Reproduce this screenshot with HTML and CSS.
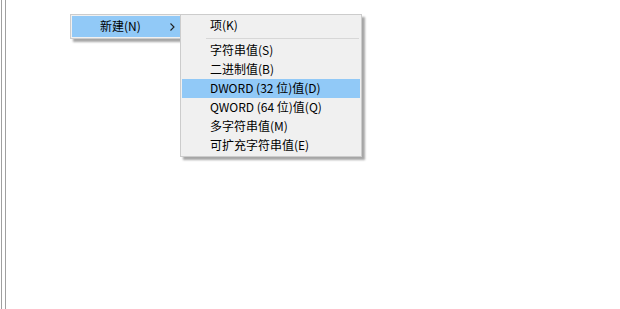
FILE: index.html
```html
<!DOCTYPE html>
<html lang="zh-CN">
<head>
<meta charset="utf-8">
<title>新建</title>
<link rel="stylesheet" href="styles.css">
</head>
<body>
<div class="frame">
  <div class="rail"></div>
  <div class="canvas">
    <div class="menu menu-main">
      <div class="item active">
        <span class="label">新建(N)</span>
        <svg class="chev" width="5" height="8" viewBox="0 0 5 8"><path d="M0.5 0.5 L4 4 L0.5 7.5" fill="none" stroke="#202020" stroke-width="1.1"/></svg>
      </div>
    </div>
    <div class="menu menu-sub">
      <div class="item">项(K)</div>
      <div class="sep"></div>
      <div class="item">字符串值(S)</div>
      <div class="item">二进制值(B)</div>
      <div class="item active">DWORD (32 位)值(D)</div>
      <div class="item">QWORD (64 位)值(Q)</div>
      <div class="item">多字符串值(M)</div>
      <div class="item">可扩充字符串值(E)</div>
    </div>
  </div>
</div>
</body>
</html>
```

FILE: styles.css
```css
html, body {
  margin: 0;
  padding: 0;
  background: #ffffff;
}
body {
  font-family: "Noto Sans CJK SC", "Noto Sans", sans-serif;
  font-size: 12px;
  color: #000;
}
.frame {
  display: flex;
  width: 620px;
  height: 309px;
  overflow: hidden;
}
.rail {
  width: 3px;
  margin-left: 1px;
  border-left: 1px solid #a0a0a0;
  border-right: 1px solid #a0a0a0;
}
.canvas {
  position: relative;
  flex: 1;
}
.menu {
  position: absolute;
  background: #f0f0f0;
  border: 1px solid #cccccc;
  padding: 1px;
  box-sizing: border-box;
  box-shadow: 3px 3px 2px rgba(0, 0, 0, 0.35);
}
.menu-main {
  left: 64px;
  top: 14px;
  width: 112px;
}
.menu-sub {
  left: 174px;
  top: 14px;
  width: 182px;
}
.item {
  height: 19px;
  line-height: 18px;
  padding-bottom: 1px;
  box-sizing: border-box;
  padding-left: 28px;
  white-space: nowrap;
}
.menu-main .item {
  height: 21px;
  line-height: 20px;
  display: flex;
  align-items: center;
  padding-right: 5px;
}
.label {
  flex: 1;
}
.chev {
  display: block;
  margin-top: 1px;
}
.active {
  background: #91c9f7;
}
.sep {
  height: 6px;
  display: flex;
  align-items: center;
  padding-left: 24px;
  padding-right: 1px;
}
.sep::after {
  content: "";
  flex: 1;
  height: 1px;
  background: #d7d7d7;
}
```
